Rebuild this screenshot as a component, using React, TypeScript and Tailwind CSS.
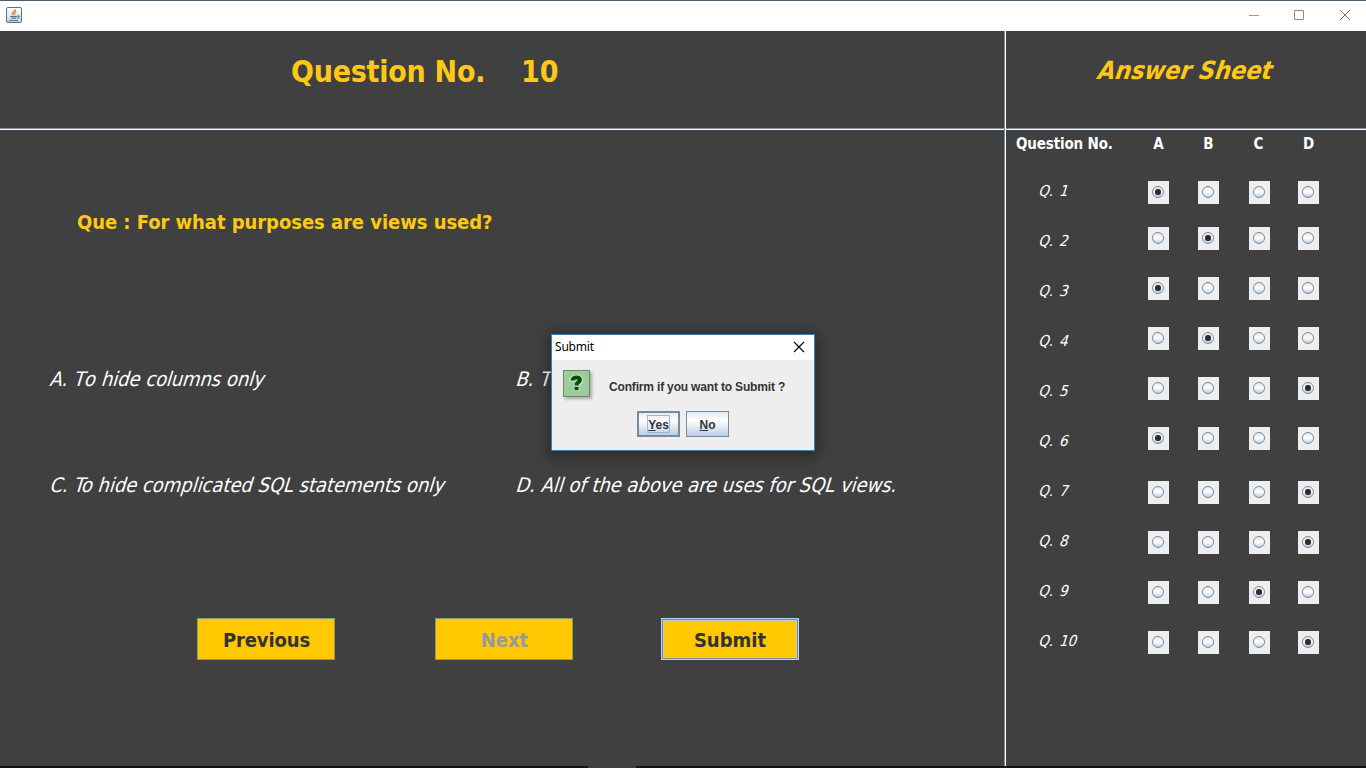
import React from "react";

const columns = ["A", "B", "C", "D"];

const rows = [
  { n: 1, answer: "A", pad: "pt-[2px]" },
  { n: 2, answer: "B", pad: "-mt-[2px]" },
  { n: 3, answer: "A", pad: "-mt-[2px]" },
  { n: 4, answer: "B", pad: "-mt-[2px]" },
  { n: 5, answer: "D", pad: "-mt-[2px]" },
  { n: 6, answer: "A", pad: "-mt-[2px]" },
  { n: 7, answer: "D", pad: "pt-[2px]" },
  { n: 8, answer: "D", pad: "pt-[2px]" },
  { n: 9, answer: "C", pad: "pt-[2px]" },
  { n: 10, answer: "D", pad: "pt-[2px]" },
];

function Radio({ on }: { on: boolean }) {
  return (
    <div className="h-[23px] w-[21px] bg-[#eeeeee] pl-1 pt-[5px]">
      <div className="flex size-3 items-center justify-center rounded-full border border-[#7a8a99] bg-linear-to-b from-[#dfeaf3] via-white to-[#b8cfe5]">
        {on && <div className="size-[6px] rounded-[2.5px] bg-[#2b2f33]" />}
      </div>
    </div>
  );
}

function JavaIcon() {
  return (
    <svg width="16" height="16" viewBox="0 0 16 16" fill="none">
      <defs>
        <linearGradient id="jbg" x1="0" y1="0" x2="0" y2="1">
          <stop offset="0" stopColor="#ffffff" />
          <stop offset="1" stopColor="#c9d4dc" />
        </linearGradient>
      </defs>
      <rect x="0.5" y="0.5" width="15" height="15" rx="1.5" fill="url(#jbg)" stroke="#5f6f7b" />
      <path d="M9.500 2.200C9.600 4 6 4.800 6.400 6.400c.2.8 1 1 1.100 1.900M10.200 4.600C8.500 5.400 8 6 8.900 7.600" stroke="#dd8846" strokeWidth="1.400" />
      <path d="M4.300 9.500h7.200M5.300 11.200h5M3 13.500h9" stroke="#55788f" strokeWidth="1.200" />
      <path d="M11.300 9c2.700-.6 2.400 1.900.2 2.400" stroke="#55788f" strokeWidth="1.100" />
    </svg>
  );
}

function QuestionIcon() {
  return (
    <div className="flex size-[27px] items-center justify-center border border-[#6b8a6b] bg-[#9ccb9c] shadow-[2px_2px_3px_#aaaaaa]">
      <svg width="25" height="25" viewBox="0 0 25 25" fill="none">
        <g stroke="#c4ecc0" strokeWidth="5.600">
          <path d="M8 10.500V9.500C8.500 5.700 16.500 5.700 16.500 9.200C16.500 12 12.500 11.500 12.500 15.500" />
          <path d="M12.500 15.500V20" />
        </g>
        <g stroke="#0a4a0a" strokeWidth="4">
          <path d="M8.500 9.500C8.700 5.500 16 5.500 16 8.700C16 11.300 12.500 11 12.500 14.500" />
          <path d="M12.500 15.800V19.200" />
        </g>
      </svg>
    </div>
  );
}

function Option({ loose, children }: { loose?: boolean; children: React.ReactNode }) {
  return (
    <div
      className={
        "origin-[0_21px] -skew-x-[17deg] text-[20px] leading-7 whitespace-nowrap text-white " +
        (loose ? "tracking-[-0.15px] [font-kerning:none] [word-spacing:0.5px]" : "tracking-[-0.04px]")
      }
    >
      {children}
    </div>
  );
}

function Dialog() {
  return (
    <div className="absolute top-[334px] left-[551px] flex h-[117px] w-[264px] flex-col border border-[#3c7fb1] bg-[#eeeeee] shadow-[0_3px_14px_3px_rgba(0,0,0,0.35)]">
      <div className="flex h-[25px] items-center justify-between bg-white pr-[9px] pb-[2px] pl-[3px]">
        <span className="font-['Noto_Sans',sans-serif] text-[12px] leading-4 tracking-[-0.2px] text-black">Submit</span>
        <svg width="12" height="12" viewBox="0 0 12 12" stroke="#000000" fill="none">
          <path d="M1 1l10 10M11 1L1 11" strokeWidth="1.100" />
        </svg>
      </div>
      <div className="flex pt-[10px] pl-[11px]">
        <QuestionIcon />
        <span className="ml-[19px] pt-[10px] font-['Liberation_Sans',sans-serif] text-[12px] leading-[15px] font-bold tracking-[-0.17px] whitespace-nowrap text-[#333333]">
          Confirm if you want to Submit ?
        </span>
      </div>
      <div className="mt-[14px] flex gap-[6px] pl-[85px] font-['Liberation_Sans',sans-serif] text-[12px] leading-[15px] font-bold text-[#333333]">
        <button className="flex h-[26px] w-[43px] items-center justify-center border-2 border-[#7a8a99] bg-linear-to-b from-[#e3ecf4] via-white via-35% to-[#b8cfe5]">
          <span className="flex h-[18px] w-[23px] items-center justify-center border border-[#a3b8cc] pt-[2px]">
            <span><span className="underline underline-offset-1">Y</span>es</span>
          </span>
        </button>
        <button className="flex h-[26px] w-[43px] items-center justify-center border border-[#7a8a99] bg-linear-to-b from-[#e3ecf4] via-white via-35% to-[#b8cfe5] pt-[2px]">
          <span><span className="underline underline-offset-1">N</span>o</span>
        </button>
      </div>
    </div>
  );
}

export default function App() {
  return (
    <div className="relative flex h-[768px] w-[1366px] flex-col overflow-hidden bg-[#404040] font-['DejaVu_Sans_Condensed','DejaVu_Sans',sans-serif]">
      <header className="flex h-[31px] items-center justify-between border-t border-[#4a5f6c] bg-white pr-4 pb-[2px] pl-[6px]">
        <JavaIcon />
        <div className="flex items-center">
          <svg width="10" height="10" viewBox="0 0 10 10" stroke="#999999"><path d="M0 5.500h10" /></svg>
          <svg className="ml-[35px]" width="10" height="10" viewBox="0 0 10 10" stroke="#8a8a8a" fill="none"><path d="M.5.5h9v9h-9z" /></svg>
          <svg className="ml-[36px]" width="10" height="10" viewBox="0 0 10 10" stroke="#777777" fill="none"><path d="M0 0l10 10M10 0L0 10" /></svg>
        </div>
      </header>

      <div className="flex h-[735px]">
        <main className="flex w-[1004px] flex-col">
          <div className="flex h-[97px] pt-[21px] pl-[291px] text-[30px] leading-[40px] font-bold whitespace-nowrap text-[#ffc817]">
            <h1 className="w-[230px] tracking-[-0.25px]">Question No.</h1>
            <span>10</span>
          </div>
          <div className="h-[2px] border-t border-b border-t-[#7a8a99] border-b-white" />
          <h2 className="mt-[78px] pl-[77px] text-[20px] leading-7 font-bold tracking-[-0.05px] text-[#ffc817]">
            Que : For what purposes are views used?
          </h2>
          <div className="mt-[129px] grid grid-cols-[466px_1fr] gap-y-[78px] pl-[49px]">
            <Option loose>A. To hide columns only</Option>
            <Option loose>B. To simplify queries</Option>
            <Option>C. To hide complicated SQL statements only</Option>
            <Option>D. All of the above are uses for SQL views.</Option>
          </div>
          <div className="mt-[119px] flex pl-[197px] text-[20px] font-bold text-[#333333]">
            <button className="h-[42px] w-[138px] border border-[#8c9a6a] bg-[#ffc800] pt-px pl-px tracking-[-0.1px]">Previous</button>
            <button className="ml-[100px] h-[42px] w-[138px] border border-[#8c9a6a] bg-[#ffc800] pt-px pl-px text-[#999999]">Next</button>
            <button className="ml-[88px] h-[42px] w-[138px] border border-[#b8cfe5]">
              <span className="flex h-[40px] items-center justify-center border border-[#7a8a99] bg-[#ffc800] pt-px inset-ring inset-ring-[#b8cfe5]">Submit</span>
            </button>
          </div>
        </main>

        <div className="w-[2px] border-r border-l border-r-white border-l-[#7a8a99]" />

        <aside className="w-[360px]">
          <div className="h-[97px] pt-[20px] pl-[91px]">
            <h2 className="origin-[0_29px] -skew-x-[9deg] text-[25px] leading-[40px] font-bold tracking-[-0.1px] whitespace-nowrap text-[#ffc817] italic">Answer Sheet</h2>
          </div>
          <div className="h-[2px] border-t border-b border-t-[#7a8a99] border-b-white" />
          <div className="grid h-[49px] grid-cols-[142px_50px_50px_50px_21px] pt-[4px] text-[15px] leading-5 font-bold text-white">
            <span className="pl-[10px] tracking-[-0.15px] whitespace-nowrap">Question No.</span>
            {columns.map((c) => (
              <span key={c} className="w-[21px] text-center">{c}</span>
            ))}
          </div>
          {rows.map((r) => (
            <div key={r.n} className="grid h-[50px] grid-cols-[142px_50px_51px_49px_21px]">
              <span className="h-6 origin-[0_17px] -skew-x-[17deg] pl-[32px] text-[15px] leading-6 whitespace-nowrap text-white [word-spacing:1.5px]">Q. {r.n}</span>
              {columns.map((c) => (
                <div key={c} className={r.pad}>
                  <Radio on={r.answer === c} />
                </div>
              ))}
            </div>
          ))}
        </aside>
      </div>

      <footer className="flex h-[2px] bg-[#151515]">
        <div className="ml-[588px] w-[48px] bg-[#404040]" />
      </footer>

      <Dialog />
    </div>
  );
}
